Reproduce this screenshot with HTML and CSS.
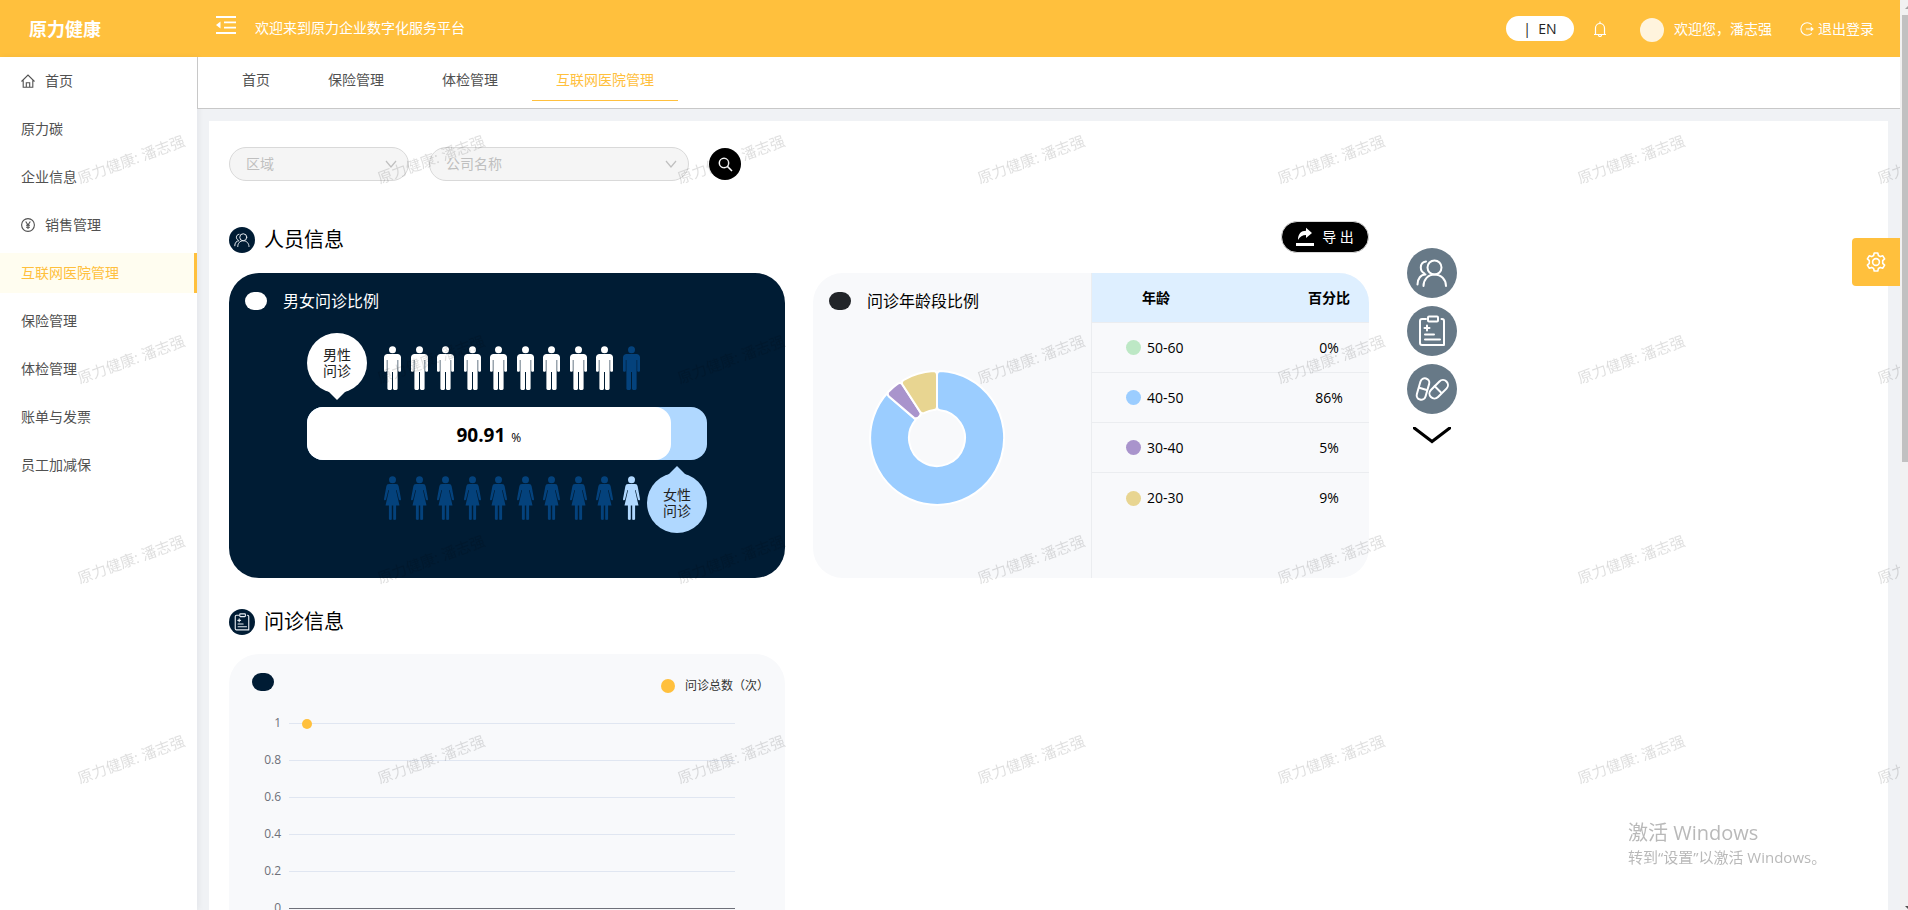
FILE: index.html
```html
<!DOCTYPE html>
<html lang="zh-CN">
<head>
<meta charset="utf-8">
<title>原力健康</title>
<link rel="stylesheet" href="styles.css">
</head>
<body>
<svg class="defs" width="0" height="0" aria-hidden="true">
  <symbol id="people" viewBox="0 0 32 28"><g fill="none" stroke="currentColor" stroke-width="2" stroke-linecap="round"><circle cx="18.500" cy="8.500" r="7"/><path d="M7.500 27c0-6.500 4.500-11.500 11-11.500s11.500 5 11.500 11.500"/><path d="M10 2.500C6.800 3 4.800 5.500 4.800 8.500c0 2.600 1.400 4.800 3.500 5.800M9.500 15.500C5 15.500 1.500 19.500 1.500 25.500"/></g></symbol>
  <symbol id="clip" viewBox="0 0 28 32"><g fill="none" stroke="currentColor" stroke-width="2" stroke-linecap="round" stroke-linejoin="round"><path d="M8 4H4a2 2 0 0 0-2 2v22a2 2 0 0 0 2 2h22V6a2 2 0 0 0-2-2h-.5"/><rect x="10" y="1.500" width="10" height="5" rx="1"/><path d="M9 10.500v5M6.500 13h5M7 19.500h9M7 24.500h15"/></g></symbol>
  <symbol id="pills" viewBox="0 0 34 28"><g fill="none" stroke="currentColor" stroke-width="2"><rect x="3.500" y="3" width="9" height="22" rx="4.500" transform="rotate(16 8 14)"/><path d="M3.500 12.500l9 2.800"/><rect x="18" y="3" width="10" height="22" rx="5" transform="rotate(45 23 15)"/><path d="M19 10.500l7.500 7.500"/></g></symbol>
  <symbol id="man" viewBox="0 0 17 44"><g fill="currentColor"><circle cx="8.500" cy="3.700" r="3.500"/><path d="M3.500 8h10c2 0 3.500 1.500 3.500 3.500V25c0 1-2.800 1-2.800 0V14h-.6v28.500c0 2-4.600 2-4.600 0V26h-1v16.500c0 2-4.600 2-4.600 0V14h-.6v11c0 1-2.800 1-2.800 0V11.500C0 9.500 1.500 8 3.500 8z"/></g></symbol>
  <symbol id="woman" viewBox="0 0 17 44"><g fill="currentColor"><circle cx="8.500" cy="3.700" r="3.500"/><path d="M5 8h7c1.600 0 2.300.8 2.700 2.500L17 23c.2 1.500-1.600 1.800-2.100.5L12.600 14l-.6.300L15.500 29.500h-3.400V43c0 1.200-2.900 1.200-2.900 0V29.500H7.800V43c0 1.200-2.900 1.200-2.900 0V29.500H1.500L5 14.300l-.6-.3-2.300 9.500C1.600 24.800-.2 24.500 0 23l2.300-12.500C2.700 8.800 3.400 8 5 8z"/></g></symbol>
  <symbol id="down" viewBox="0 0 12 8"><path d="M1 1l5 6 5-6" fill="none" stroke="currentColor" stroke-width="1.200"/></symbol>
</svg>

<header class="topbar">
  <h1 class="brand">原力健康</h1>
  <button class="fold" aria-label="收起菜单"><svg width="20" height="18" viewBox="0 0 20 18"><path d="M0 1h20M8 6.300h12M8 11.600h12M0 17h20" stroke="currentColor" stroke-width="1.800"/><path d="M4.500 5.500v7L0 9z" fill="currentColor"/></svg></button>
  <p class="welcome">欢迎来到原力企业数字化服务平台</p>
  <button class="lang">| &nbsp;EN</button>
  <button class="bell" aria-label="通知"><svg width="14" height="16" viewBox="0 0 14 16"><path d="M1 13.500h12M2.500 13.500V7a4.500 4.500 0 0 1 9 0v6.500M7 2.500V.5M5.500 14a1.500 1.500 0 0 0 3 0" fill="none" stroke="currentColor" stroke-width="1.200"/></svg></button>
  <span class="avatar"></span>
  <span class="hello">欢迎您，潘志强</span>
  <a class="logout" href="#"><svg width="14" height="14" viewBox="0 0 14 14"><path d="M11.700 2.600a6.300 6.300 0 1 0 0 8.800M6 7h6.500M10.800 5.200L13 7l-2.200 1.800" fill="none" stroke="currentColor" stroke-width="1.100"/></svg>退出登录</a>
</header>

<div class="layout">
  <nav class="side">
    <a href="#"><svg width="14" height="14" viewBox="0 0 14 14"><path d="M.5 7.500L7 1l6.500 6.500M2.200 6.500v6.800h9.600V6.500M5.300 13V8.700h3.400V13" fill="none" stroke="currentColor" stroke-width="1.100"/></svg>首页</a>
    <a href="#">原力碳</a>
    <a href="#">企业信息</a>
    <a href="#"><svg width="14" height="14" viewBox="0 0 14 14"><g fill="none" stroke="currentColor" stroke-width="1.100"><circle cx="7" cy="7" r="6.400"/><path d="M4.700 3.500L7 7l2.300-3.500M7 7v4M5 7.300h4M5 9.200h4"/></g></svg>销售管理</a>
    <a class="on" href="#">互联网医院管理</a>
    <a href="#">保险管理</a>
    <a href="#">体检管理</a>
    <a href="#">账单与发票</a>
    <a href="#">员工加减保</a>
  </nav>

  <div class="body">
    <nav class="tabs">
      <a href="#">首页</a><a href="#">保险管理</a><a href="#">体检管理</a><a class="on" href="#">互联网医院管理</a>
    </nav>

    <main class="panel">
      <div class="content">
        <form class="filters">
          <label class="pick area"><select aria-label="区域"><option>区域</option></select><svg width="12" height="8"><use href="#down"/></svg></label>
          <label class="pick company"><select aria-label="公司名称"><option>公司名称</option></select><svg width="12" height="8"><use href="#down"/></svg></label>
          <button class="search" type="button" aria-label="搜索"><svg width="16" height="16" viewBox="0 0 16 16"><g fill="none" stroke="currentColor" stroke-width="1.500"><circle cx="7" cy="7" r="4.700"/><path d="M10.400 10.400L15 15"/></g></svg></button>
        </form>

        <div class="heading">
          <span class="badge"><svg width="16" height="14"><use href="#people"/></svg></span>
          <h2>人员信息</h2>
          <button class="export"><svg width="18" height="20" viewBox="0 0 18 20"><path d="M2 13C2 7 5 3.800 10 3.800V.8L16 6l-6 5V8C6.500 8 4 9.500 2 13zM0 16h18v3H0z" fill="currentColor"/></svg>导 出</button>
        </div>

        <div class="cards">
          <section class="card dark">
            <div class="title"><i class="dot"></i><h3>男女问诊比例</h3></div>
            <div class="ratio">
              <div class="line">
                <div class="bubble male">男性<br>问诊</div>
                <div class="crowd white">
                  <svg><use href="#man"/></svg><svg><use href="#man"/></svg><svg><use href="#man"/></svg><svg><use href="#man"/></svg><svg><use href="#man"/></svg><svg><use href="#man"/></svg><svg><use href="#man"/></svg><svg><use href="#man"/></svg><svg><use href="#man"/></svg><svg class="rest"><use href="#man"/></svg>
                </div>
              </div>
              <div class="bar"><div class="fill" style="width:90.91%"><b>90.91</b><span>%</span></div></div>
              <div class="line end">
                <div class="crowd sky">
                  <svg class="rest"><use href="#woman"/></svg><svg class="rest"><use href="#woman"/></svg><svg class="rest"><use href="#woman"/></svg><svg class="rest"><use href="#woman"/></svg><svg class="rest"><use href="#woman"/></svg><svg class="rest"><use href="#woman"/></svg><svg class="rest"><use href="#woman"/></svg><svg class="rest"><use href="#woman"/></svg><svg class="rest"><use href="#woman"/></svg><svg><use href="#woman"/></svg>
                </div>
                <div class="bubble female">女性<br>问诊</div>
              </div>
            </div>
          </section>

          <section class="card ages">
            <div class="pie">
              <div class="title"><i class="dot"></i><h3>问诊年龄段比例</h3></div>
              <svg class="donut" width="138" height="138" viewBox="-69 -69 138 138">
                <g stroke="#fff" stroke-width="2" stroke-linejoin="round">
                  <path fill="#9bcdff" d="M4 -67A67 67 0 1 1 -48.500 -46.200Q-50.600 -44 -48 -41.600L-21.200 -18.300A28 28 0 1 0 3 -27.800Q0 -28 0 -31V-63Q0 -67 4 -67Z"/>
                  <path fill="#a994cc" d="M-48 -46.800A67 67 0 0 1 -39.500 -54.100Q-36.500 -56.300 -34.200 -53L-17 -26.200Q-15.200 -23.500 -17.600 -21.600Q-20 -18.500 -23 -20.200L-48 -41.600Q-50.500 -44 -48 -46.800Z"/>
                  <path fill="#e8d591" d="M-33.200 -58.200A67 67 0 0 1 -4 -67Q0 -67 0 -63V-31Q0 -28 -3 -27.900A28 28 0 0 0 -12 -25.400Q-15.100 -23.600 -17 -26.400L-34.600 -53.400Q-36.300 -56.300 -33.200 -58.200Z"/>
                </g>
              </svg>
            </div>
            <table>
              <thead><tr><th>年龄</th><th>百分比</th></tr></thead>
              <tbody>
                <tr><td><i class="key green"></i>50-60</td><td>0%</td></tr>
                <tr><td><i class="key blue"></i>40-50</td><td>86%</td></tr>
                <tr><td><i class="key purple"></i>30-40</td><td>5%</td></tr>
                <tr><td><i class="key gold"></i>20-30</td><td>9%</td></tr>
              </tbody>
            </table>
          </section>
        </div>

        <div class="heading second">
          <span class="badge"><svg width="16" height="18"><use href="#clip"/></svg></span>
          <h2>问诊信息</h2>
        </div>

        <div class="cards">
          <section class="card trend">
            <div class="legend"><i class="dot"></i><span class="series"><i></i>问诊总数（次）</span></div>
            <div class="plot">
              <div class="tick"><span>1</span><i></i><b class="point"></b></div>
              <div class="tick"><span>0.8</span><i></i></div>
              <div class="tick"><span>0.6</span><i></i></div>
              <div class="tick"><span>0.4</span><i></i></div>
              <div class="tick"><span>0.2</span><i></i></div>
              <div class="tick axis"><span>0</span><i></i></div>
            </div>
          </section>
        </div>
      </div>

      <nav class="jump">
        <a href="#" aria-label="人员信息"><svg width="32" height="28"><use href="#people"/></svg></a>
        <a href="#" aria-label="问诊信息"><svg width="28" height="32"><use href="#clip"/></svg></a>
        <a href="#" aria-label="药品信息"><svg width="34" height="28"><use href="#pills"/></svg></a>
        <button aria-label="展开"><svg width="38" height="17" viewBox="0 0 38 17"><path d="M0 0l19 14.500L38 0" fill="none" stroke="#000" stroke-width="3"/></svg></button>
      </nav>
    </main>
  </div>
</div>

<svg class="watermark" aria-hidden="true">
  <defs><pattern id="wm" width="300" height="200" patternUnits="userSpaceOnUse"><text transform="translate(80 184) rotate(-20)">原力健康: 潘志强</text></pattern></defs>
  <rect width="100%" height="100%" fill="url(#wm)"/>
</svg>
<button class="setting" aria-label="设置"><svg width="20" height="20" viewBox="0 0 20 20"><g fill="none" stroke="currentColor" stroke-width="1.600" stroke-linejoin="round"><circle cx="10" cy="10" r="3.400"/><path d="M8.200 1h3.600l.6 2.500 1.900 1.100 2.500-.8 1.800 3.100-1.900 1.800v2.600l1.900 1.800-1.800 3.100-2.500-.8-1.900 1.100-.6 2.500H8.200l-.6-2.500-1.900-1.100-2.500.8-1.800-3.100 1.900-1.800V8.700L1.400 6.900l1.800-3.100 2.500.8 1.900-1.100z"/></g></svg></button>
<aside class="activate"><strong>激活 Windows</strong><span>转到“设置”以激活 Windows。</span></aside>
<div class="scroll"><i class="up"></i><i class="thumb"></i><i class="dn"></i></div>
</body>
</html>
```

FILE: styles.css
```css
* { box-sizing: border-box; }
body {
  margin: 0;
  height: 100vh;
  overflow: hidden;
  display: flex;
  flex-direction: column;
  padding-right: 8px;
  background: #f0f2f5;
  color: #000;
  font: 14px/20px "Open Sans", "Noto Sans CJK SC", sans-serif;
}
h1, h2, h3, p { margin: 0; font-weight: 400; }
a { color: inherit; text-decoration: none; }
button { border: 0; padding: 0; background: none; color: inherit; font: inherit; }
svg { display: block; flex: none; }
.defs { position: absolute; }

.topbar {
  flex: none;
  height: 57px;
  display: flex;
  align-items: center;
  padding-right: 26px;
  background: #ffc03d;
  color: #fff;
}
.brand { width: 216px; padding-left: 29px; font-size: 18px; line-height: 24px; font-weight: 700; }
.fold { margin-bottom: 8px; }
.welcome { margin-left: 19px; margin-bottom: 2px; }
.lang { margin-left: auto; width: 68px; height: 25px; border-radius: 13px; background: #fff; color: #222; }
.bell { margin-left: 19px; }
.avatar { margin: 3px 10px 0 33px; width: 24px; height: 24px; border-radius: 50%; background: #fff4dd; }
.logout { margin-left: 28px; display: flex; align-items: center; gap: 4px; }

.layout { flex: 1; min-height: 0; display: flex; }
.side {
  z-index: 1;
  flex: none;
  width: 197px;
  padding-top: 4px;
  display: flex;
  flex-direction: column;
  gap: 8px;
  background: #fff;
  color: #515151;
  box-shadow: 2px 0 6px rgba(0, 21, 41, .05);
}
.side a { height: 40px; padding-left: 21px; display: flex; align-items: center; gap: 10px; }
.side .on { background: #fffdf0; color: #ffc03d; border-right: 3px solid #ffc03d; }

.body { flex: 1; min-width: 0; display: flex; flex-direction: column; }
.tabs {
  z-index: 2;
  flex: none;
  display: flex;
  gap: 10px;
  height: 52px;
  padding-left: 20px;
  background: #fff;
  border-left: 1px solid #c8c8c8;
  border-bottom: 1px solid #c8c8c8;
  color: #515151;
}
.tabs a { height: 44px; padding: 13px 24px 0; }
.tabs .on { color: #ffc03d; border-bottom: 1px solid #ffc03d; }

.panel {
  flex: 1;
  min-height: 0;
  overflow: hidden;
  margin: 12px 12px 0;
  padding: 26px 20px 0;
  display: flex;
  align-items: flex-start;
  gap: 38px;
  background: #fff;
}
.content { flex: 0 1 1140px; }

.filters { display: flex; align-items: center; gap: 20px; }
.pick { height: 34px; padding: 0 11px 0 16px; display: flex; align-items: center; border: 1px solid #d9d9d9; border-radius: 17px; background: #f5f5f5; color: #bfbfbf; }
.pick select { flex: 1; min-width: 0; appearance: none; border: 0; padding: 0; background: none; color: inherit; font: inherit; }
.area { width: 180px; }
.company { width: 260px; }
.search { width: 32px; height: 32px; border-radius: 50%; background: #000; color: #fff; display: grid; place-items: center; }

.heading { display: flex; align-items: center; gap: 9px; height: 32px; margin: 43px 0 17px; }
.heading h2 { font-size: 20px; line-height: 28px; }
.heading.second { margin: 28px 0 16px; }
.badge { width: 26px; height: 26px; border-radius: 50%; background: #001c34; color: #e8edf2; display: grid; place-items: center; }
.export {
  margin-left: auto;
  margin-bottom: 6px;
  width: 88px;
  height: 32px;
  display: flex;
  align-items: center;
  justify-content: center;
  gap: 8px;
  border: 1px solid #d9d9d9;
  border-radius: 16px;
  background: #000;
  color: #fff;
}

.cards { display: grid; grid-template-columns: 1fr 1fr; gap: 28px; }
.card { border-radius: 30px; background: #f8f9fb; overflow: hidden; }
.title { display: flex; align-items: center; gap: 16px; padding: 16px 16px 0; height: 40px; }
.title h3 { font-size: 16px; line-height: 24px; }
.dot { width: 22px; height: 18px; border-radius: 9px; background: #222529; }
.dark { height: 305px; background: #001c34; color: #fff; }
.dark .dot { background: #fff; }

.ratio { width: 400px; margin: 20px auto 0; }
.line { display: flex; gap: 17px; }
.line.end { justify-content: flex-end; gap: 7px; }
.bubble {
  position: relative;
  width: 60px;
  height: 60px;
  border-radius: 50%;
  display: grid;
  place-content: center;
  color: #222;
  line-height: 16px;
}
.bubble::after { content: ""; position: absolute; left: 21px; border: 9px solid transparent; }
.male { background: #fff; }
.male::after { top: 58px; border-top-color: #fff; border-bottom: 0; }
.female { background: #b0d8ff; }
.female::after { bottom: 58px; border-bottom-color: #b0d8ff; border-top: 0; }
.crowd { width: 256px; display: flex; justify-content: space-between; }
.crowd svg { width: 17px; height: 44px; }
.male + .crowd { margin-top: 13px; }
.sky { margin-top: 3px; }
.white { color: #fff; }
.sky { color: #b0d8ff; }
.crowd .rest { color: #04427c; }
.bar { height: 53px; margin: 14px 0 13px; border-radius: 16px; background: #b0d8ff; }
.fill { height: 100%; display: flex; align-items: baseline; justify-content: center; gap: 6px; border-radius: 16px; background: #fff; color: #000; line-height: 56px; }
.fill b { font-size: 19px; }
.fill span { font-size: 12px; }

.ages { display: flex; }
.pie { flex: 1; }
.donut { margin: 56px 0 0 55px; }
.ages table { width: 50%; align-self: stretch; border-left: 1px solid #ebedf0; border-collapse: collapse; display: block; }
.ages thead, .ages tbody { display: block; }
.ages tr { display: flex; align-items: center; height: 50px; border-bottom: 1px solid #ebedf0; }
.ages tbody tr:last-child { border-bottom: 0; }
.ages thead tr { background: #deefff; }
.ages th { padding: 0 0 0 50px; flex: 1; text-align: left; }
.ages td { padding: 0 0 0 34px; flex: 1; display: flex; align-items: center; gap: 6px; }
.ages th:last-child, .ages td:last-child { flex: 0 0 80px; padding: 0; display: block; text-align: center; }
.key { width: 15px; height: 15px; border-radius: 50%; }
.green { background: #bde8c5; }
.blue { background: #9bcdff; }
.purple { background: #a994cc; }
.gold { background: #e8d591; }

.trend { padding: 19px 16px 30px 23px; }
.legend { display: flex; justify-content: space-between; }
.trend .dot { background: #001c34; }
.series { display: flex; align-items: center; gap: 10px; padding-top: 3px; font-size: 12px; color: #333; }
.series i { width: 14px; height: 14px; border-radius: 50%; background: #ffc03d; }
.plot { margin: 9px 34px 0 0; }
.tick { position: relative; display: flex; align-items: center; gap: 8px; height: 37px; font-size: 12px; color: #6e7079; }
.tick span { width: 29px; padding-bottom: 2px; text-align: right; }
.tick i { flex: 1; height: 1px; background: #e0e6f1; }
.axis i { background: #6e7079; }
.point { position: absolute; left: 50px; width: 10px; height: 10px; border-radius: 50%; background: #ffc03d; }

.jump { margin-top: 101px; display: flex; flex-direction: column; align-items: center; gap: 8px; color: #fff; }
.jump a { width: 50px; height: 50px; border-radius: 50%; background: #677987; display: grid; place-items: center; }
.jump button { margin-top: 5px; }

.watermark { position: fixed; z-index: 5; left: 0; top: 0; width: calc(100% - 8px); height: 100%; pointer-events: none; }
.watermark text { font: 15px "Open Sans", "Noto Sans CJK SC", sans-serif; fill: rgba(0, 0, 0, .13); }
.setting { position: fixed; z-index: 6; right: 8px; top: 238px; width: 48px; height: 48px; border-radius: 4px 0 0 4px; background: #ffc03d; color: #fff; display: grid; place-items: center; }
.activate { position: fixed; z-index: 6; right: 80px; bottom: 42px; width: 200px; display: flex; flex-direction: column; color: #b9b9b9; font-size: 15px; line-height: 22px; white-space: nowrap; }
.activate strong { font-size: 20px; line-height: 26px; font-weight: 400; }
.scroll { position: fixed; z-index: 7; right: 0; top: 0; bottom: 0; width: 8px; overflow: hidden; background: #f1f1f1; }
.scroll i { position: absolute; left: 2px; }
.scroll .thumb { top: 15px; width: 8px; height: 447px; background: #c1c1c1; }
.scroll .up { left: 5px; top: 5px; border: 4px solid transparent; border-top: 0; border-bottom-color: #a3a3a3; }
.scroll .dn { left: 5px; bottom: 0; border: 4px solid transparent; border-bottom: 0; border-top-color: #505050; }
```
